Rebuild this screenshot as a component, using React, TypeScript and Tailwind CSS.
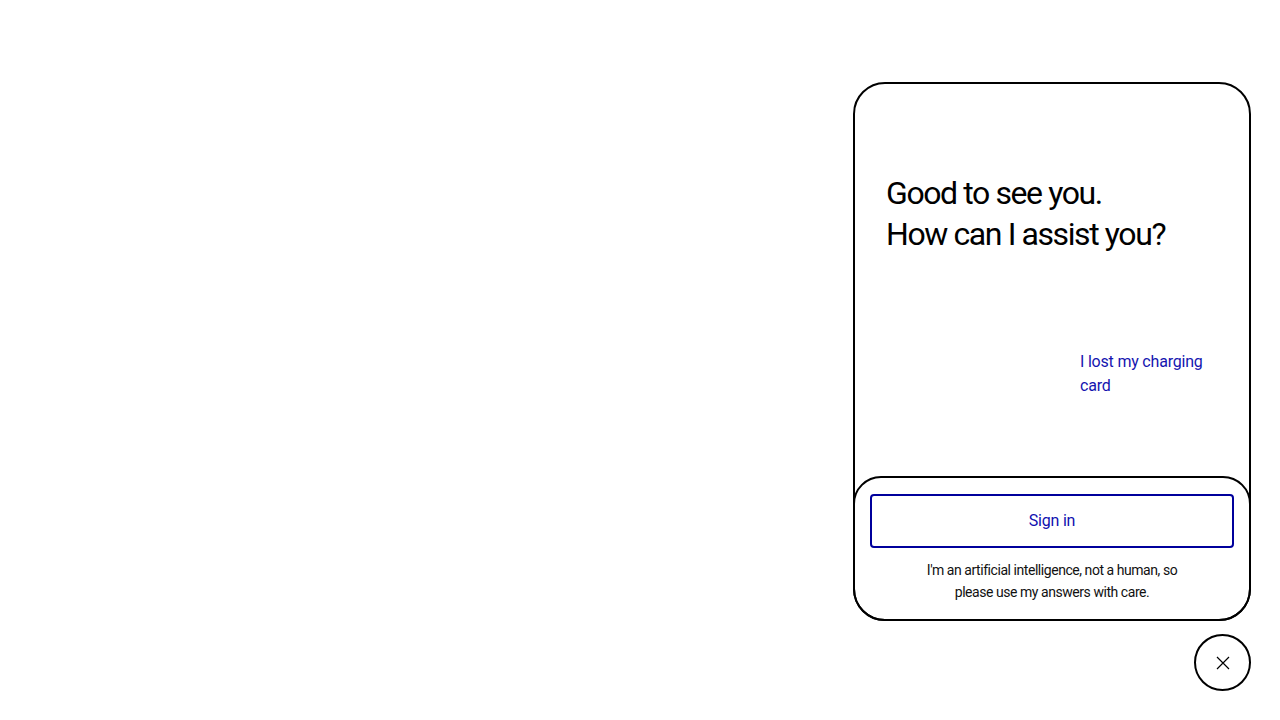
import React from "react";

const font = { fontFamily: 'Roboto, "DejaVu Sans Condensed", sans-serif' };

export default function App() {
  return (
    <div className="w-full h-screen bg-white flex flex-col items-end justify-end pr-[29px] pb-[29px] gap-[13px]" style={font}>
      <div className="w-[398px] h-[539px] border-2 border-black rounded-[32px] flex flex-col bg-white">
        <div className="flex-1 flex flex-col">
          <h1 className="pt-[89px] pl-[31px] text-[32px] leading-[41px] text-black font-normal tracking-[-1.4px]">
            Good to see you.
            <br />
            How can I assist you?
          </h1>
          <div className="mt-[95px] ml-auto mr-[29px] w-[140px] text-[16px] leading-[24px] text-[#1515b0] tracking-[-0.2px]">
            I lost my charging card
          </div>
        </div>
        <div className="-mx-[2px] -mb-[2px] border-2 border-black rounded-t-[28px] rounded-b-[32px] px-[15px] pt-[16px] pb-[16px] flex flex-col items-center">
          <button className="w-full h-[54px] border-2 border-[#00009c] rounded-[4px] text-[16px] text-[#1010b0] flex items-center justify-center tracking-[-0.2px]">
            Sign in
          </button>
          <p className="mt-[11px] text-[14px] leading-[22px] text-[#111] text-center w-[262px] tracking-[-0.45px]">
            I'm an artificial intelligence, not a human, so please use my answers with care.
          </p>
        </div>
      </div>
      <button className="w-[57px] h-[57px] rounded-full border-2 border-black bg-white flex items-center justify-center" aria-label="Close">
        <svg width="14" height="14" viewBox="0 0 14 14" fill="none">
          <path d="M1 1 L13 13 M13 1 L1 13" stroke="#000" strokeWidth="1.2" />
        </svg>
      </button>
    </div>
  );
}
